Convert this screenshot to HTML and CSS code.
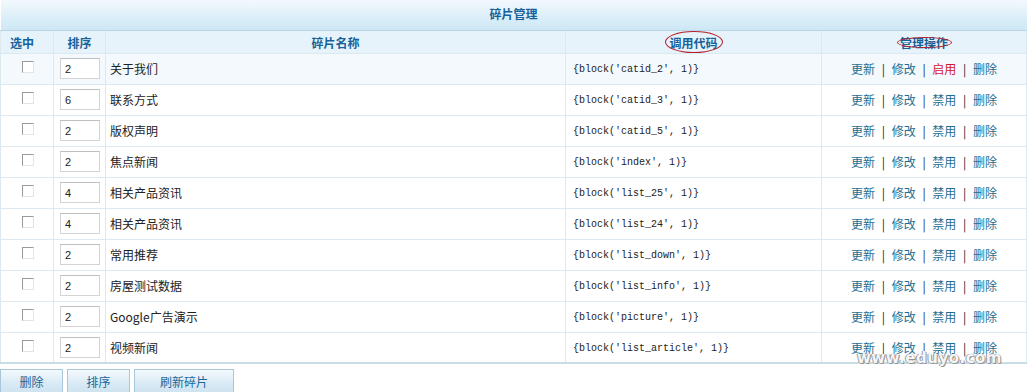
FILE: index.html
```html
<!DOCTYPE html>
<html lang="zh">
<head>
  <meta charset="UTF-8">
  <title>碎片管理</title>
  <link rel="stylesheet" href="styles.css">
</head>
<body>
  <table class="grid">
    <colgroup>
      <col class="c-check">
      <col class="c-order">
      <col class="c-name">
      <col class="c-code">
      <col class="c-ops">
    </colgroup>
    <tr class="caption-row">
      <td colspan="5">碎片管理</td>
    </tr>
    <tr class="head-row">
      <th>选中</th>
      <th>排序</th>
      <th>碎片名称</th>
      <th><span class="mark mark-code">调用代码</span></th>
      <th><span class="mark mark-ops">管理操作</span></th>
    </tr>
    <tr class="hl">
      <td class="center"><span class="box"></span></td>
      <td><span class="num">2</span></td>
      <td>关于我们</td>
      <td class="code">{block('catid_2', 1)}</td>
      <td class="ops"><a>更新</a> <i>|</i> <a>修改</a> <i>|</i> <a class="on">启用</a> <i>|</i> <a>删除</a></td>
    </tr>
    <tr>
      <td class="center"><span class="box"></span></td>
      <td><span class="num">6</span></td>
      <td>联系方式</td>
      <td class="code">{block('catid_3', 1)}</td>
      <td class="ops"><a>更新</a> <i>|</i> <a>修改</a> <i>|</i> <a>禁用</a> <i>|</i> <a>删除</a></td>
    </tr>
    <tr>
      <td class="center"><span class="box"></span></td>
      <td><span class="num">2</span></td>
      <td>版权声明</td>
      <td class="code">{block('catid_5', 1)}</td>
      <td class="ops"><a>更新</a> <i>|</i> <a>修改</a> <i>|</i> <a>禁用</a> <i>|</i> <a>删除</a></td>
    </tr>
    <tr>
      <td class="center"><span class="box"></span></td>
      <td><span class="num">2</span></td>
      <td>焦点新闻</td>
      <td class="code">{block('index', 1)}</td>
      <td class="ops"><a>更新</a> <i>|</i> <a>修改</a> <i>|</i> <a>禁用</a> <i>|</i> <a>删除</a></td>
    </tr>
    <tr>
      <td class="center"><span class="box"></span></td>
      <td><span class="num">4</span></td>
      <td>相关产品资讯</td>
      <td class="code">{block('list_25', 1)}</td>
      <td class="ops"><a>更新</a> <i>|</i> <a>修改</a> <i>|</i> <a>禁用</a> <i>|</i> <a>删除</a></td>
    </tr>
    <tr>
      <td class="center"><span class="box"></span></td>
      <td><span class="num">4</span></td>
      <td>相关产品资讯</td>
      <td class="code">{block('list_24', 1)}</td>
      <td class="ops"><a>更新</a> <i>|</i> <a>修改</a> <i>|</i> <a>禁用</a> <i>|</i> <a>删除</a></td>
    </tr>
    <tr>
      <td class="center"><span class="box"></span></td>
      <td><span class="num">2</span></td>
      <td>常用推荐</td>
      <td class="code">{block('list_down', 1)}</td>
      <td class="ops"><a>更新</a> <i>|</i> <a>修改</a> <i>|</i> <a>禁用</a> <i>|</i> <a>删除</a></td>
    </tr>
    <tr>
      <td class="center"><span class="box"></span></td>
      <td><span class="num">2</span></td>
      <td>房屋测试数据</td>
      <td class="code">{block('list_info', 1)}</td>
      <td class="ops"><a>更新</a> <i>|</i> <a>修改</a> <i>|</i> <a>禁用</a> <i>|</i> <a>删除</a></td>
    </tr>
    <tr>
      <td class="center"><span class="box"></span></td>
      <td><span class="num">2</span></td>
      <td>Google广告演示</td>
      <td class="code">{block('picture', 1)}</td>
      <td class="ops"><a>更新</a> <i>|</i> <a>修改</a> <i>|</i> <a>禁用</a> <i>|</i> <a>删除</a></td>
    </tr>
    <tr class="last">
      <td class="center"><span class="box"></span></td>
      <td><span class="num">2</span></td>
      <td>视频新闻</td>
      <td class="code">{block('list_article', 1)}</td>
      <td class="ops wm-cell"><a>更新</a> <i>|</i> <a>修改</a> <i>|</i> <a>禁用</a> <i>|</i> <a>删除</a><span class="watermark">www.eduyo.com</span></td>
    </tr>
  </table>

  <div class="actions">
    <button class="btn w62">删除</button>
    <button class="btn w62">排序</button>
    <button class="btn w99">刷新碎片</button>
  </div>
</body>
</html>
```

FILE: styles.css
```css
* { box-sizing: border-box; }
body {
  margin: 0;
  padding: 0;
  background: #ffffff;
  font-family: "Noto Sans CJK SC", "Liberation Sans", sans-serif;
  font-size: 12px;
  color: #222;
  overflow: hidden;
}
.grid {
  width: 1026px;
  border-collapse: collapse;
  table-layout: fixed;
  border-bottom: 2px solid #c9dde9;
}
.c-check { width: 53px; }
.c-order { width: 52px; }
.c-name { width: 460px; }
.c-code { width: 256px; }
.c-ops { width: 205px; }
.grid td, .grid th {
  border: 1px solid #dce9f1;
  height: 31px;
  padding: 0 4px;
  white-space: nowrap;
}
.caption-row td {
  height: 30px;
  padding-bottom: 3px;
  text-align: center;
  font-weight: bold;
  color: #15629a;
  border: none;
  border-bottom: 1px solid #b9d6e8;
  background: linear-gradient(#f3f9fd, #d6ecf8 70%, #cfe8f6);
}
.head-row th {
  height: 23px;
  font-weight: bold;
  color: #15629a;
  background: #e6f3fb;
  padding-top: 1px;
}
.head-row th:first-child { text-align: left; padding-left: 9px; }
.hl td { background: #f3f9fd; }
.center { text-align: center; }
.box {
  display: inline-block;
  width: 12px;
  height: 12px;
  margin-left: 2px;
  border: 1px solid #9a9a9a;
  border-right-color: #e4e4e4;
  border-bottom-color: #e4e4e4;
  background: #fff;
  vertical-align: 1px;
}
.num {
  display: block;
  width: 40px;
  height: 21px;
  margin-left: 2px;
  border: 1px solid #d4d4d4;
  border-top-color: #bfbfbf;
  background: #fff;
  font-family: "Liberation Sans", sans-serif;
  font-size: 11px;
  line-height: 20px;
  padding-left: 4px;
}
.code {
  font-family: "Liberation Mono", monospace;
  font-size: 10px;
  padding-left: 7px !important;
  padding-top: 2px !important;
}
.ops {
  text-align: center;
  word-spacing: 4px;
}
.ops i {
  font-style: normal;
  color: #222;
  word-spacing: 0;
}
.ops a {
  color: #1e6e92;
  word-spacing: 0;
}
.ops a.on { color: #d0172b; }
.mark { position: relative; }
.mark::after {
  content: "";
  position: absolute;
  border: 1px solid #b5202a;
  border-radius: 50%;
}
.mark-code::after { left: -4px; right: -5px; top: -3px; bottom: -2px; }
.mark-ops::after { left: -3px; right: -4px; top: 3px; bottom: 3px; }
.wm-cell { position: relative; }
.watermark {
  position: absolute;
  right: 24px;
  bottom: -5px;
  font-family: "DejaVu Sans", sans-serif;
  font-size: 15px;
  font-weight: bold;
  letter-spacing: 0.5px;
  color: #f6f6f6;
  word-spacing: 0;
  text-shadow: 0 0 1px #777, 1px 1px 0 #999, -1px 0 0 #aaa;
}
.actions {
  display: flex;
  gap: 4px;
  margin-top: 5px;
}
.btn {
  height: 24px;
  border: 1px solid #a9c7da;
  background: linear-gradient(#f4f9fc, #d9eaf5 60%, #cfe3f0);
  color: #20679a;
  font-family: "Noto Sans CJK SC", sans-serif;
  font-size: 12px;
  padding: 0;
}
.w62 { width: 63px; }
.w99 { width: 100px; }
```
